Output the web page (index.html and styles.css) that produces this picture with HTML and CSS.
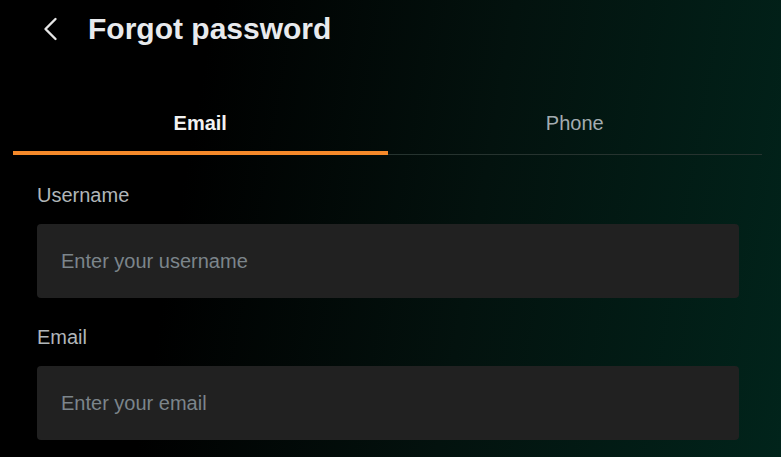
FILE: index.html
```html
<!DOCTYPE html>
<html lang="en">
<head>
    <meta charset="UTF-8">
    <meta name="viewport" content="width=device-width, initial-scale=1.0">
    <title>Forgot password</title>
    <link rel="stylesheet" href="styles.css">
</head>
<body>
    <div class="page">
        <div class="header">
            <button class="back-button" aria-label="Back">
                <svg viewBox="0 0 14 24" class="back-icon">
                    <path d="M12 2L2 12L12 22" fill="none" stroke="currentColor" stroke-width="2.4" stroke-linecap="round" stroke-linejoin="round"/>
                </svg>
            </button>
            <h1 class="title">Forgot password</h1>
        </div>

        <!-- tabs -->
        <div class="tabs">
            <div class="tab active">Email</div>
            <div class="tab">Phone</div>
        </div>

        <form class="form">
            <div class="field">
                <label class="field-label" for="username">Username</label>
                <input class="field-input" id="username" type="text" placeholder="Enter your username">
            </div>
            <div class="field">
                <label class="field-label" for="email">Email</label>
                <input class="field-input" id="email" type="email" placeholder="Enter your email">
            </div>
        </form>
    </div>
</body>
</html>
```

FILE: styles.css
```css
html, body {
    height: 100%;
}

body {
    font-family: "Liberation Sans", Arial, Helvetica, sans-serif;
    margin: 0;
    padding: 0;
    color: #e8eaed;
    background: linear-gradient(100deg, #000 25%, #03120e 60%, #01241b 100%);
    overflow: hidden;
}

.page {
    padding: 0 19px 0 13px;
}

.header {
    display: flex;
    align-items: center;
    height: 57px;
    padding-left: 30px;
}

.back-button {
    background: none;
    border: none;
    padding: 0;
    margin: 0 30px 0 0;
    color: #e6e6e6;
    display: flex;
    cursor: pointer;
}

.back-icon {
    width: 15px;
    height: 24px;
}

.title {
    margin: 0;
    font-size: 30px;
    font-weight: 700;
    color: #e8eaed;
}

.tabs {
    display: flex;
    margin-top: 38px;
    border-bottom: 1px solid #26332f;
}

.tab {
    flex: 1;
    text-align: center;
    font-size: 20px;
    color: #a3acb0;
    height: 60px;
    line-height: 56px;
    margin-bottom: -1px;
    box-sizing: border-box;
}

.tab.active {
    color: #f2f2f2;
    font-weight: 700;
    border-bottom: 4px solid #f5892a;
}

.form {
    padding: 28px 23px 0 24px;
}

.field {
    margin-bottom: 27px;
}

.field-label {
    display: block;
    font-size: 20px;
    color: #b1b6b9;
    line-height: 24px;
    margin-bottom: 17px;
}

.field-input {
    display: block;
    width: 100%;
    box-sizing: border-box;
    height: 74px;
    padding: 0 24px;
    background-color: #212121;
    border: none;
    border-radius: 4px;
    font-family: inherit;
    font-size: 20px;
    color: #e8eaed;
    outline: none;
}

.field-input::placeholder {
    color: #7c858b;
}
```
